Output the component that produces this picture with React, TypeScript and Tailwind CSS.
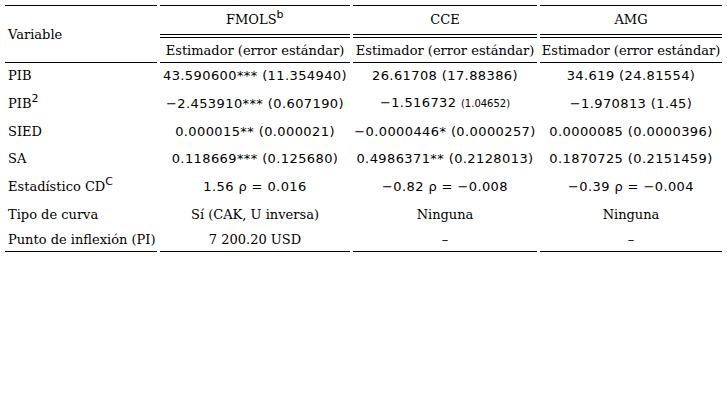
import React from 'react';

const serif = "font-['DejaVu_Serif',serif]";
const sans = "font-['DejaVu_Sans',sans-serif] tracking-[0.4px]";

type Row = {
  label: React.ReactNode;
  h: string;
  cells: React.ReactNode[];
};

const rows: Row[] = [
  {
    label: 'PIB',
    h: 'h-[25px]',
    cells: ['43.590600*** (11.354940)', '26.61708 (17.88386)', '34.619 (24.81554)'],
  },
  {
    label: (
      <>
        PIB<sup className={`${sans} text-[11px]`}>2</sup>
      </>
    ),
    h: 'h-[30px]',
    cells: [
      '−2.453910*** (0.607190)',
      <>
        −1.516732 <span className="text-[10px] tracking-normal">(1.04652)</span>
      </>,
      '−1.970813 (1.45)',
    ],
  },
  {
    label: 'SIED',
    h: 'h-[27px]',
    cells: ['0.000015** (0.000021)', '−0.0000446* (0.0000257)', '0.0000085 (0.0000396)'],
  },
  {
    label: 'SA',
    h: 'h-[26px]',
    cells: ['0.118669*** (0.125680)', '0.4986371** (0.2128013)', '0.1870725 (0.2151459)'],
  },
  {
    label: (
      <>
        Estadístico CD<sup className={`${sans} text-[11px]`}>C</sup>
      </>
    ),
    h: 'h-[30px]',
    cells: ['1.56 ρ = 0.016', '−0.82 ρ = −0.008', '−0.39 ρ = −0.004'],
  },
  {
    label: 'Tipo de curva',
    h: 'h-[27px]',
    cells: [
      <span className={`${serif} tracking-normal`}>Sí (CAK, U inversa)</span>,
      <span className={`${serif} tracking-normal`}>Ninguna</span>,
      <span className={`${serif} tracking-normal`}>Ninguna</span>,
    ],
  },
  {
    label: 'Punto de inflexión (PI)',
    h: 'h-[24px]',
    cells: [
      <span className={`${serif} tracking-normal`}>7 200.20 USD</span>,
      <span className={`${serif} tracking-normal`}>–</span>,
      <span className={`${serif} tracking-normal`}>–</span>,
    ],
  },
];

export default function App() {
  return (
    <div className="w-[727px] h-[403px] bg-white text-black pt-[5px] pl-[2px]">
      <table className={`table-fixed w-[723px] border-separate border-spacing-x-[3px] border-spacing-y-0 text-[13px] leading-[15px] ${serif}`}>
        <colgroup>
          <col className="w-[152px]" />
          <col className="w-[190px]" />
          <col className="w-[184px]" />
          <col className="w-[182px]" />
        </colgroup>
        <thead>
          <tr className="h-[33px]">
            <th
              rowSpan={2}
              className="border-t border-b border-black text-left font-normal px-[3px] align-middle"
            >
              Variable
            </th>
            <th className="border-t border-b-4 border-double border-black font-normal align-middle">
              <span className="relative top-[-1px]">
                FMOLS<sup className={`${sans} text-[11px]`}>b</sup>
              </span>
            </th>
            <th className="border-t border-b-4 border-double border-black font-normal align-middle">
              <span className="relative top-[-1px]">CCE</span>
            </th>
            <th className="border-t border-b-4 border-double border-black font-normal align-middle">
              <span className="relative top-[-1px]">AMG</span>
            </th>
          </tr>
          <tr className="h-[25px]">
            {[0, 1, 2].map((i) => (
              <th key={i} className="border-b border-black font-normal align-middle whitespace-nowrap">
                Estimador (error estándar)
              </th>
            ))}
          </tr>
        </thead>
        <tbody>
          {rows.map((r, i) => {
            const last = i === rows.length - 1;
            return (
              <tr key={i} className={r.h}>
                <td className={`px-[3px] align-middle whitespace-nowrap ${last ? 'border-b border-black' : ''}`}>
                  {r.label}
                </td>
                {r.cells.map((c, j) => (
                  <td
                    key={j}
                    className={`text-center align-middle whitespace-nowrap ${sans} ${last ? 'border-b border-black' : ''}`}
                  >
                    {c}
                  </td>
                ))}
              </tr>
            );
          })}
        </tbody>
      </table>
    </div>
  );
}
